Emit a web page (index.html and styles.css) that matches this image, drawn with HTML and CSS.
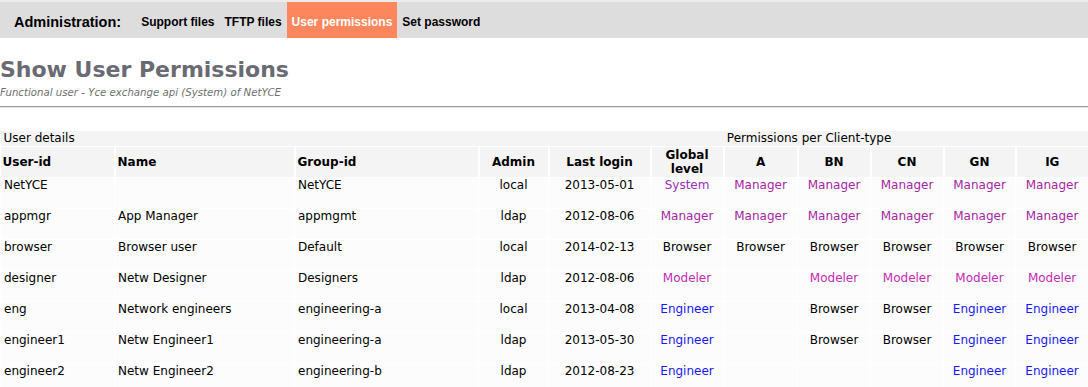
FILE: index.html
```html
<!DOCTYPE html>
<html lang="en">
<head>
    <meta charset="UTF-8">
    <title>Show User Permissions</title>
    <link rel="stylesheet" href="styles.css">
</head>
<body>

<div class="topbar">
    <span class="topbar-title">Administration:</span>
    <a href="#" class="topbar-link">Support files</a>
    <a href="#" class="topbar-link">TFTP files</a>
    <a href="#" class="topbar-link active">User permissions</a>
    <a href="#" class="topbar-link">Set password</a>
</div>

<div class="page-header">
    <h1>Show User Permissions</h1>
    <p class="subtitle">Functional user - Yce exchange api (System) of NetYCE</p>
    <hr>
</div>

<table class="perm-table">
    <colgroup>
        <col style="width: 114px">
        <col style="width: 180px">
        <col style="width: 184px">
        <col style="width: 70px">
        <col style="width: 102px">
        <col style="width: 73px">
        <col style="width: 74px">
        <col style="width: 73px">
        <col style="width: 73px">
        <col style="width: 72px">
        <col style="width: 73px">
    </colgroup>
    <tr class="group-row">
        <td colspan="4">User details</td>
        <td colspan="7" class="group-perm">Permissions per Client-type</td>
    </tr>
    <tr class="head-row">
        <th class="left">User-id</th>
        <th class="left">Name</th>
        <th class="left">Group-id</th>
        <th>Admin</th>
        <th>Last login</th>
        <th>Global<br>level</th>
        <th>A</th>
        <th>BN</th>
        <th>CN</th>
        <th>GN</th>
        <th>IG</th>
    </tr>
    <tr>
        <td class="left">NetYCE</td>
        <td class="left"></td>
        <td class="left">NetYCE</td>
        <td>local</td>
        <td>2013-05-01</td>
        <td class="system">System</td>
        <td class="manager">Manager</td>
        <td class="manager">Manager</td>
        <td class="manager">Manager</td>
        <td class="manager">Manager</td>
        <td class="manager">Manager</td>
    </tr>
    <tr>
        <td class="left">appmgr</td>
        <td class="left">App Manager</td>
        <td class="left">appmgmt</td>
        <td>ldap</td>
        <td>2012-08-06</td>
        <td class="manager">Manager</td>
        <td class="manager">Manager</td>
        <td class="manager">Manager</td>
        <td class="manager">Manager</td>
        <td class="manager">Manager</td>
        <td class="manager">Manager</td>
    </tr>
    <tr>
        <td class="left">browser</td>
        <td class="left">Browser user</td>
        <td class="left">Default</td>
        <td>local</td>
        <td>2014-02-13</td>
        <td>Browser</td>
        <td>Browser</td>
        <td>Browser</td>
        <td>Browser</td>
        <td>Browser</td>
        <td>Browser</td>
    </tr>
    <tr>
        <td class="left">designer</td>
        <td class="left">Netw Designer</td>
        <td class="left">Designers</td>
        <td>ldap</td>
        <td>2012-08-06</td>
        <td class="modeler">Modeler</td>
        <td></td>
        <td class="modeler">Modeler</td>
        <td class="modeler">Modeler</td>
        <td class="modeler">Modeler</td>
        <td class="modeler">Modeler</td>
    </tr>
    <tr>
        <td class="left">eng</td>
        <td class="left">Network engineers</td>
        <td class="left">engineering-a</td>
        <td>local</td>
        <td>2013-04-08</td>
        <td class="engineer">Engineer</td>
        <td></td>
        <td>Browser</td>
        <td>Browser</td>
        <td class="engineer">Engineer</td>
        <td class="engineer">Engineer</td>
    </tr>
    <tr>
        <td class="left">engineer1</td>
        <td class="left">Netw Engineer1</td>
        <td class="left">engineering-a</td>
        <td>ldap</td>
        <td>2013-05-30</td>
        <td class="engineer">Engineer</td>
        <td></td>
        <td>Browser</td>
        <td>Browser</td>
        <td class="engineer">Engineer</td>
        <td class="engineer">Engineer</td>
    </tr>
    <tr>
        <td class="left">engineer2</td>
        <td class="left">Netw Engineer2</td>
        <td class="left">engineering-b</td>
        <td>ldap</td>
        <td>2012-08-23</td>
        <td class="engineer">Engineer</td>
        <td></td>
        <td></td>
        <td></td>
        <td class="engineer">Engineer</td>
        <td class="engineer">Engineer</td>
    </tr>
</table>

</body>
</html>
```

FILE: styles.css
```css
/* Page layout */
body {
    margin: 0;
    font-family: "DejaVu Sans", Verdana, sans-serif;
    font-size: 12px;
    color: #000;
    background: #fff;
}

/* Admin navigation bar */
.topbar {
    display: flex;
    align-items: stretch;
    height: 36px;
    border-top: 2px solid #ececec;
    background-color: #dddddd;
    font-family: "Liberation Sans", Arial, sans-serif;
}
.topbar-title {
    display: flex;
    align-items: center;
    padding: 3px 15px 0 14px;
    font-size: 14.5px;
    font-weight: bold;
}
.topbar-link {
    display: flex;
    align-items: center;
    padding: 3px 5px 0;
    font-size: 12px;
    font-weight: bold;
    color: #000;
    text-decoration: none;
}
.topbar-link.active {
    background-color: #fd865d;
    color: #fff;
}

/* Title block */
.page-header h1 {
    margin: 19px 0 0;
    font-size: 22px;
    line-height: 26px;
    color: #6a6a72;
}
.subtitle {
    margin: 3px 0 0;
    font-size: 10.2px;
    line-height: 13px;
    font-style: italic;
    color: #6f6f6f;
}
.page-header hr {
    margin: 7px 0 0;
    border: none;
    border-top: 1px solid #999;
    border-bottom: 1px solid #e4e4e4;
}

/* Permissions table */
.perm-table {
    margin-top: 22px;
    width: 1088px;
    table-layout: fixed;
    border-collapse: collapse;
}
.perm-table td,
.perm-table th {
    border: 1px solid #fff;
    text-align: center;
    white-space: nowrap;
}
.perm-table .left {
    text-align: left;
    padding-left: 2px;
}
.group-row td {
    height: 15px;
    padding: 0 3px;
    line-height: 15px;
    background-color: #f4f4f4;
    text-align: left;
    border-left: none;
    border-right: none;
}
.group-row .group-perm {
    text-align: center;
    padding-right: 22px;
}
.head-row th {
    height: 28px;
    padding: 1px 3px;
    line-height: 14px;
    background-color: #f4f4f4;
    border-left: 2px solid #fff;
}
.head-row th:first-child {
    border-left: none;
}
.perm-table tr:not(.group-row):not(.head-row) td {
    height: 30px;
    padding: 0 3px 0;
    line-height: 15px;
    vertical-align: top;
    background-color: #fcfcfc;
}

/* Permission levels */
.system {
    color: #9b30b8;
}
.manager {
    color: #a626a4;
}
.modeler {
    color: #c42ab4;
}
.engineer {
    color: #1818f0;
}
```
